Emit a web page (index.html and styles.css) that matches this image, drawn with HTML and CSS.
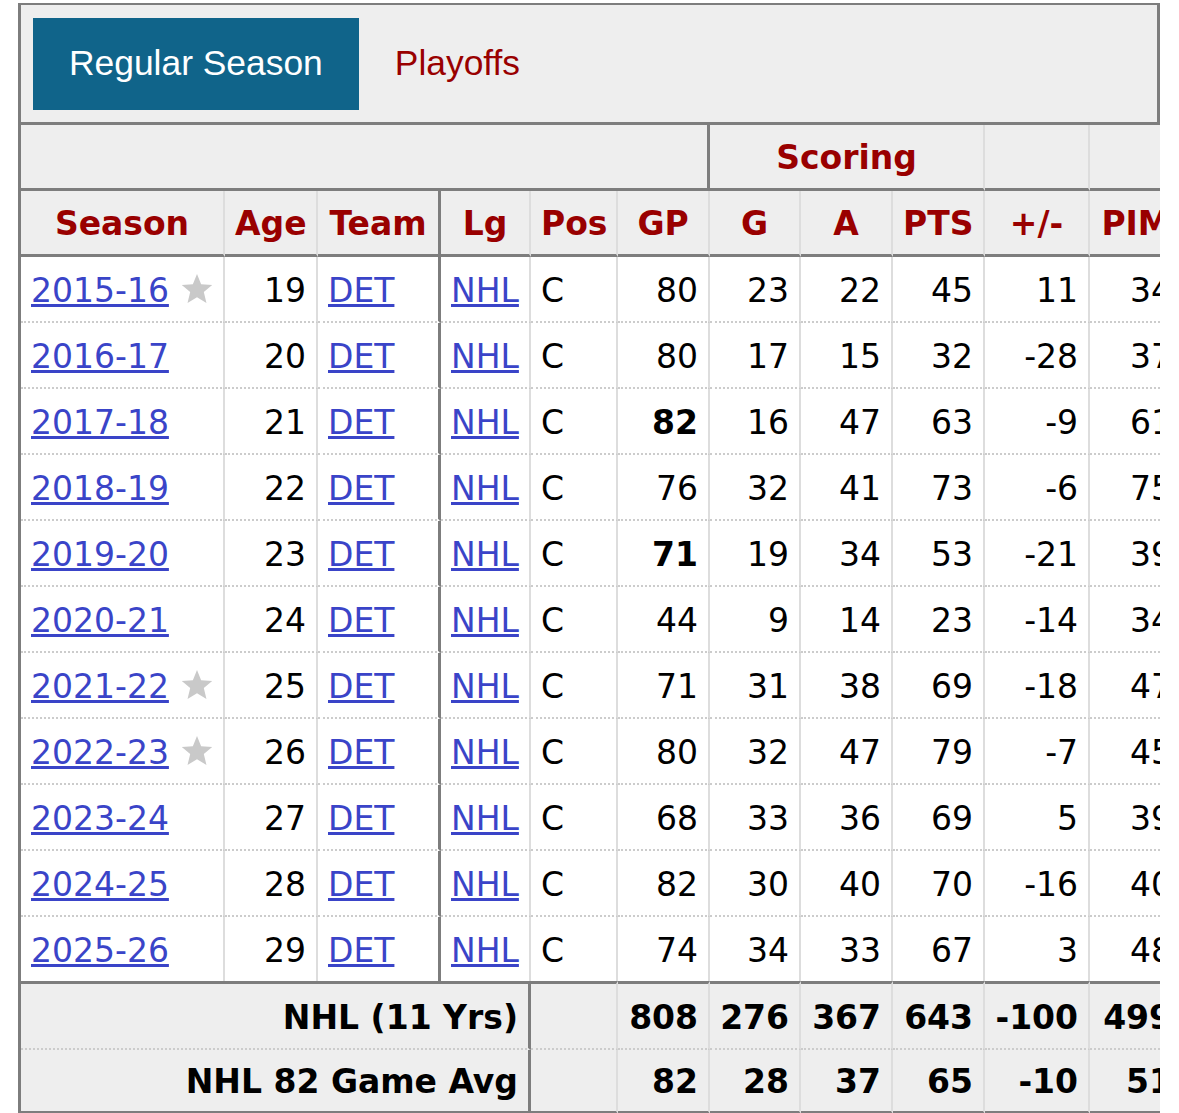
FILE: index.html
```html
<!DOCTYPE html>
<html lang="en">
<head>
<meta charset="utf-8">
<title>Stats</title>
<link rel="stylesheet" href="styles.css">
</head>
<body>
<div class="frame">
  <div class="tabs">
    <div class="tab active">Regular Season</div>
    <div class="tab">Playoffs</div>
  </div>
  <table class="stats">
    <colgroup>
      <col class="c-season"><col class="c-age"><col class="c-team"><col class="c-lg"><col class="c-pos"><col class="c-gp"><col class="c-g"><col class="c-a"><col class="c-pts"><col class="c-pm"><col class="c-pim">
    </colgroup>
    <thead>
      <tr class="over">
        <th colspan="6" class="split"></th>
        <th colspan="3">Scoring</th>
        <th></th>
        <th></th>
      </tr>
      <tr class="head">
        <th>Season</th><th>Age</th><th class="split">Team</th><th>Lg</th><th>Pos</th><th>GP</th><th>G</th><th>A</th><th>PTS</th><th>+/-</th><th>PIM</th>
      </tr>
    </thead>
    <tbody>
      <tr><td class="l"><a href="#">2015-16</a><svg class="star" viewBox="0 0 24 24" width="32" height="32"><polygon points="12,0.8 15.1,8.4 23.4,9 17.1,14.3 19.1,22.5 12,18.1 4.9,22.5 6.9,14.3 0.6,9 8.9,8.4"/></svg></td><td>19</td><td class="l split"><a href="#">DET</a></td><td class="l"><a href="#">NHL</a></td><td class="l">C</td><td>80</td><td>23</td><td>22</td><td>45</td><td>11</td><td>34</td></tr>
      <tr><td class="l"><a href="#">2016-17</a></td><td>20</td><td class="l split"><a href="#">DET</a></td><td class="l"><a href="#">NHL</a></td><td class="l">C</td><td>80</td><td>17</td><td>15</td><td>32</td><td>-28</td><td>37</td></tr>
      <tr><td class="l"><a href="#">2017-18</a></td><td>21</td><td class="l split"><a href="#">DET</a></td><td class="l"><a href="#">NHL</a></td><td class="l">C</td><td class="b">82</td><td>16</td><td>47</td><td>63</td><td>-9</td><td>61</td></tr>
      <tr><td class="l"><a href="#">2018-19</a></td><td>22</td><td class="l split"><a href="#">DET</a></td><td class="l"><a href="#">NHL</a></td><td class="l">C</td><td>76</td><td>32</td><td>41</td><td>73</td><td>-6</td><td>75</td></tr>
      <tr><td class="l"><a href="#">2019-20</a></td><td>23</td><td class="l split"><a href="#">DET</a></td><td class="l"><a href="#">NHL</a></td><td class="l">C</td><td class="b">71</td><td>19</td><td>34</td><td>53</td><td>-21</td><td>39</td></tr>
      <tr><td class="l"><a href="#">2020-21</a></td><td>24</td><td class="l split"><a href="#">DET</a></td><td class="l"><a href="#">NHL</a></td><td class="l">C</td><td>44</td><td>9</td><td>14</td><td>23</td><td>-14</td><td>34</td></tr>
      <tr><td class="l"><a href="#">2021-22</a><svg class="star" viewBox="0 0 24 24" width="32" height="32"><polygon points="12,0.8 15.1,8.4 23.4,9 17.1,14.3 19.1,22.5 12,18.1 4.9,22.5 6.9,14.3 0.6,9 8.9,8.4"/></svg></td><td>25</td><td class="l split"><a href="#">DET</a></td><td class="l"><a href="#">NHL</a></td><td class="l">C</td><td>71</td><td>31</td><td>38</td><td>69</td><td>-18</td><td>47</td></tr>
      <tr><td class="l"><a href="#">2022-23</a><svg class="star" viewBox="0 0 24 24" width="32" height="32"><polygon points="12,0.8 15.1,8.4 23.4,9 17.1,14.3 19.1,22.5 12,18.1 4.9,22.5 6.9,14.3 0.6,9 8.9,8.4"/></svg></td><td>26</td><td class="l split"><a href="#">DET</a></td><td class="l"><a href="#">NHL</a></td><td class="l">C</td><td>80</td><td>32</td><td>47</td><td>79</td><td>-7</td><td>45</td></tr>
      <tr><td class="l"><a href="#">2023-24</a></td><td>27</td><td class="l split"><a href="#">DET</a></td><td class="l"><a href="#">NHL</a></td><td class="l">C</td><td>68</td><td>33</td><td>36</td><td>69</td><td>5</td><td>39</td></tr>
      <tr><td class="l"><a href="#">2024-25</a></td><td>28</td><td class="l split"><a href="#">DET</a></td><td class="l"><a href="#">NHL</a></td><td class="l">C</td><td>82</td><td>30</td><td>40</td><td>70</td><td>-16</td><td>40</td></tr>
      <tr><td class="l"><a href="#">2025-26</a></td><td>29</td><td class="l split"><a href="#">DET</a></td><td class="l"><a href="#">NHL</a></td><td class="l">C</td><td>74</td><td>34</td><td>33</td><td>67</td><td>3</td><td>48</td></tr>
    </tbody>
    <tfoot>
      <tr><td colspan="4" class="split">NHL (11 Yrs)</td><td></td><td>808</td><td>276</td><td>367</td><td>643</td><td>-100</td><td>499</td></tr>
      <tr><td colspan="4" class="split">NHL 82 Game Avg</td><td></td><td>82</td><td>28</td><td>37</td><td>65</td><td>-10</td><td>51</td></tr>
    </tfoot>
  </table>
</div>
</body>
</html>
```

FILE: styles.css
```css
html, body {
  margin: 0;
  padding: 0;
  background: #fff;
}

body {
  font-family: "DejaVu Sans", Verdana, sans-serif;
  color: #000;
}

.frame {
  margin: 3px 0 0 18px;
  width: 1142px;
  box-sizing: border-box;
  border-left: 3px solid #7d7d7d;
  border-top: 2px solid #7d7d7d;
  overflow: hidden;
}

.tabs {
  display: flex;
  align-items: center;
  height: 117px;
  padding-left: 12px;
  background: #eeeeee;
  border-right: 3px solid #7d7d7d;
  border-bottom: 3px solid #7d7d7d;
}

.tab {
  display: flex;
  align-items: center;
  height: 92px;
  padding: 0 36px;
  font-family: "Liberation Sans", Arial, sans-serif;
  font-size: 35.4px;
  color: #990000;
}

.tab.active {
  background: #10648a;
  color: #ffffff;
}

.stats {
  table-layout: fixed;
  width: 1163px;
  border-collapse: separate;
  border-spacing: 0;
  font-size: 33px;
}

.c-season { width: 204px; }
.c-age { width: 93px; }
.c-team { width: 123px; }
.c-lg { width: 90px; }
.c-pos { width: 87px; }
.c-gp { width: 92px; }
.c-g { width: 91px; }
.c-a { width: 92px; }
.c-pts { width: 92px; }
.c-pm { width: 105px; }
.c-pim { width: 94px; }

.stats th,
.stats td {
  box-sizing: border-box;
  padding: 0 10px;
  white-space: nowrap;
  border-right: 2px solid #dddddd;
}

.stats thead th {
  background: #eeeeee;
  color: #990000;
  font-weight: bold;
  padding-top: 3px;
  line-height: 60px;
  text-align: center;
  border-bottom: 3px solid #7d7d7d;
}

.stats tbody td {
  padding-top: 3px;
  line-height: 61px;
  text-align: right;
  border-bottom: 2px dotted #cccccc;
}

.stats tbody tr:last-child td {
  border-bottom: none;
}

.stats tbody td.l {
  text-align: left;
}

.stats td.b {
  font-weight: bold;
}

.stats a {
  color: #3a44c8;
  text-decoration: underline;
}

.star {
  margin-left: 12px;
  vertical-align: -3px;
  fill: #c9c9c9;
}

.stats tfoot td {
  background: #eeeeee;
  font-weight: bold;
  text-align: right;
  padding-top: 3px;
  line-height: 61px;
}

.stats tfoot tr:first-child td {
  border-top: 3px solid #7d7d7d;
  border-bottom: 2px dotted #cccccc;
}

.stats tfoot tr:last-child td {
  line-height: 58px;
  border-bottom: 3px solid #7d7d7d;
}

.stats th.split,
.stats td.split {
  border-right: 3px solid #7d7d7d;
}
```
